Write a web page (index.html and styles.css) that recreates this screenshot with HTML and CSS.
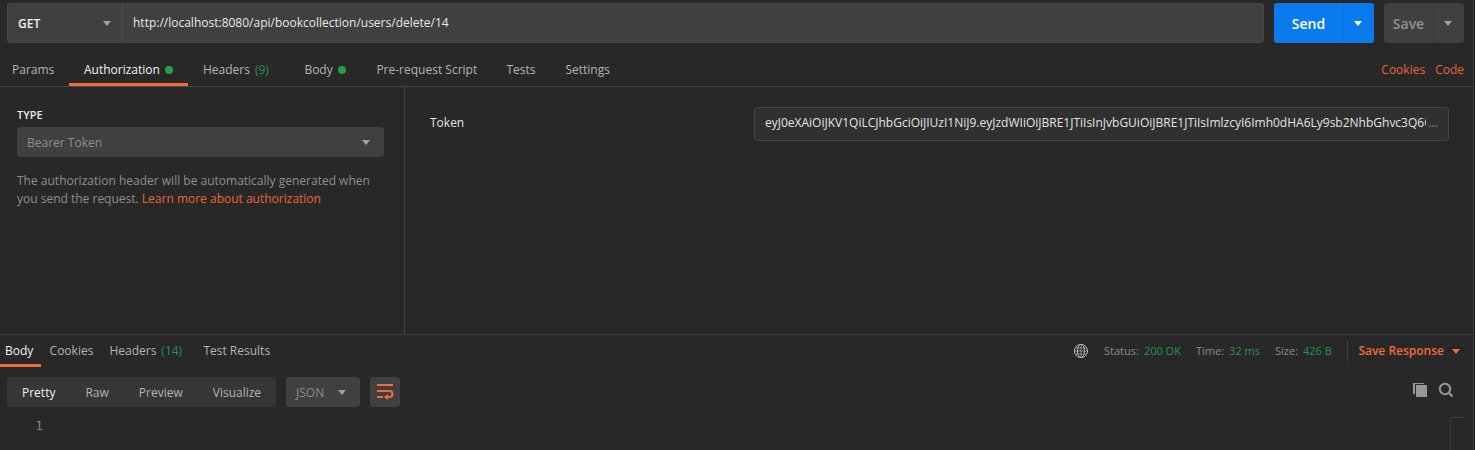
FILE: index.html
```html
<!DOCTYPE html>
<html lang="en">
<head>
<meta charset="utf-8">
<title>API request</title>
<link rel="stylesheet" href="styles.css">
</head>
<body>
<div class="app">
  <header class="request-bar">
    <div class="url-group">
      <div class="method"><span>GET</span><i class="caret"></i></div>
      <div class="url">http://localhost:8080/api/bookcollection/users/delete/14</div>
    </div>
    <div class="button send"><span class="label">Send</span><span class="drop"><i class="caret"></i></span></div>
    <div class="button save"><span class="label">Save</span><span class="drop"><i class="caret"></i></span></div>
  </header>
  <nav class="tabs">
    <span class="tab tab-params">Params</span>
    <span class="tab tab-auth active">Authorization<i class="dot"></i></span>
    <span class="tab tab-headers">Headers<span class="count">(9)</span></span>
    <span class="tab tab-body">Body<i class="dot"></i></span>
    <span class="tab tab-pre">Pre-request Script</span>
    <span class="tab tab-tests">Tests</span>
    <span class="tab">Settings</span>
    <span class="links"><a>Cookies</a><a>Code</a></span>
  </nav>
  <main class="auth">
    <section class="auth-type">
      <h2>TYPE</h2>
      <div class="select"><span>Bearer Token</span><i class="caret"></i></div>
      <p>The authorization header will be automatically generated when<br>you send the request. <a>Learn more about authorization</a></p>
    </section>
    <section class="auth-fields">
      <label>Token</label>
      <div class="token"><span class="value">eyJ0eXAiOiJKV1QiLCJhbGciOiJIUzI1NiJ9.eyJzdWIiOiJBRE1JTiIsInJvbGUiOiJBRE1JTiIsImlzcyI6Imh0dHA6Ly9sb2NhbGhvc3Q6O</span><span class="more">...</span></div>
    </section>
  </main>
  <section class="response">
    <div class="response-head">
      <span class="rtab rtab-body active">Body</span>
      <span class="rtab rtab-cookies">Cookies</span>
      <span class="rtab rtab-headers">Headers<span class="count">(14)</span></span>
      <span class="rtab">Test Results</span>
      <div class="meta">
        <svg class="globe" width="16" height="16" viewBox="0 0 16 16" fill="none" stroke="#b4b4b4" stroke-width="1"><circle cx="8" cy="8" r="6.6"/><ellipse cx="8" cy="8" rx="3.5" ry="6.6"/><path d="M2.6 5h10.8M1.4 8h13.2M2.6 11h10.8M8 1.4v13.2" stroke-opacity=".7"/></svg>
        <span class="stat stat-status">Status:<b>200 OK</b></span>
        <span class="stat stat-time">Time:<b>32 ms</b></span>
        <span class="stat stat-size">Size:<b>426 B</b></span>
        <span class="save-response">Save Response<i class="caret"></i></span>
      </div>
    </div>
    <div class="toolbar">
      <div class="views"><span class="on">Pretty</span><span>Raw</span><span>Preview</span><span>Visualize</span></div>
      <div class="format"><span>JSON</span><i class="caret"></i></div>
      <div class="wrap"><svg width="30" height="30" viewBox="0 0 30 30" fill="none" stroke="#f26b3a" stroke-width="2"><path d="M7 8h16M7 14h12.5a3 3 0 0 1 0 6H16M7 20h6"/><path d="M18 17l-4 3 4 3z" fill="#f26b3a" stroke="none"/></svg></div>
      <div class="tools">
        <svg width="16" height="16" viewBox="0 0 16 16"><path d="M1 1h11v1H3v10H1z" fill="#979797"/><path d="M4 3h11v12H4z" fill="#979797"/></svg>
        <svg width="16" height="16" viewBox="0 0 16 16" fill="none" stroke="#979797" stroke-width="2"><circle cx="7" cy="7" r="5.2"/><path d="M10.8 10.8l3.7 3.7" stroke-width="2.2"/></svg>
      </div>
    </div>
    <div class="editor"><span class="line-number">1</span><div class="minimap"></div></div>
  </section>
</div>
</body>
</html>
```

FILE: styles.css
```css
* { box-sizing: border-box; }
body { margin: 0; background: #161616; font: 12px/18px "Open Sans", "Noto Sans", sans-serif; color: #b4b4b4; }
.app { width: 1474px; height: 450px; background: #282828; border-right: 1px solid #3c3c3c; overflow: hidden; display: flex; flex-direction: column; white-space: nowrap; }
a { color: #e8653a; }
.caret { display: block; flex: none; width: 0; height: 0; border: 4px solid transparent; border-top: 5px solid #a0a0a0; border-bottom: 0; }
.request-bar { display: flex; height: 53px; padding: 3px 9px 0 7px; }
.url-group { display: flex; width: 1257px; height: 40px; margin-right: 10px; background: #404040; border: 1px solid #484848; border-radius: 3px; }
.method { display: flex; align-items: center; justify-content: space-between; width: 115px; padding: 2px 11px 0 10px; border-right: 1px solid #4b4b4b; color: #f0f0f0; font-weight: 600; }
.method .caret { margin-top: -2px; }
.url { padding: 10px; color: #e8e8e8; }
.button { display: flex; height: 40px; border-radius: 3px; font-size: 14px; font-weight: 600; overflow: hidden; }
.button .label { display: flex; align-items: center; justify-content: center; padding-top: 2px; }
.drop { flex: 1; display: flex; align-items: center; padding-left: 10px; }
.send { width: 100px; margin-right: 10px; background: #097bed; color: #fff; }
.send .label { width: 69px; }
.send .drop { border-left: 1px solid #0872dc; }
.send .caret { border-top-color: #fff; }
.save { width: 80px; background: #404040; color: #919191; }
.save .label { width: 49px; }
.save .drop { border-left: 1px solid #383838; }
.tabs { display: flex; height: 34px; border-bottom: 1px solid #464646; padding-right: 9px; }
.tab { display: flex; padding: 8px 15px 0; height: 33px; }
.tab-params { width: 69px; padding-left: 12px; }
.tab-auth { width: 119px; }
.tab-headers { width: 101.4px; }
.tab-body { width: 72px; }
.tab-pre { width: 130px; }
.tab-tests { width: 59px; }
.active { color: #f2f2f2; border-bottom: 3px solid #f26b3a; }
.dot { width: 8px; height: 8px; margin: 5px 0 0 5px; border-radius: 50%; background: #2a9d4d; flex: none; }
.count { color: #26934a; margin-left: 5px; }
.links { margin-left: auto; padding-top: 8px; display: flex; gap: 10px; }
.auth { display: flex; height: 248px; border-bottom: 1px solid #3f3f3f; }
.auth-type { width: 405px; padding: 19px 20px 0 17px; border-right: 1px solid #464646; color: #8e8e8e; }
h2 { margin: 0 0 3px; font-size: 11px; line-height: 18px; font-weight: 600; color: #e8e8e8; }
.select { display: flex; align-items: center; justify-content: space-between; height: 30px; padding: 0 14px 0 10px; background: #404040; border-radius: 3px; }
.select span, .format span { padding-top: 2px; }
p { margin: 15px 0 0; }
.auth-fields { flex: 1; display: flex; padding: 20px 24px 0 25px; color: #e4e4e4; }
label { width: 324px; padding-top: 7px; }
.token { display: flex; width: 695px; height: 34px; padding: 6px 10px; background: #303030; border: 1px solid #444; border-radius: 3px; }
.value { width: 661px; overflow: hidden; }
.more { color: #8c8c8c; margin-left: 3px; }
.response-head { display: flex; height: 32px; }
.rtab { display: flex; padding-top: 7px; }
.rtab-body { width: 41px; padding-left: 5px; margin-right: 8.6px; }
.rtab-cookies { width: 59.8px; }
.rtab-headers { width: 94px; }
.meta { display: flex; margin-left: auto; padding-top: 7px; }
.globe { margin: 1px 15px 0 0; }
.stat { display: flex; font-size: 11px; color: #8b8b8b; }
.stat b { font-weight: 400; color: #26934a; margin-left: 5px; }
.stat-status { width: 92px; }
.stat-time { width: 79px; }
.stat-size { width: 72px; }
.save-response { display: flex; width: 126px; height: 20px; margin-top: -1px; padding: 1px 0 0 10.4px; border-left: 1px solid #464646; color: #f26b3a; font-weight: 600; }
.save-response .caret { margin: 7px 0 0 8px; border-top-color: #f26b3a; }
.toolbar { display: flex; height: 40px; margin-top: 10px; padding: 0 19px 0 7px; }
.views { display: flex; width: 269px; height: 30px; padding: 7px 0 0 15px; gap: 30px; background: #363636; border-radius: 3px; }
.on { color: #f2f2f2; }
.format { display: flex; align-items: center; justify-content: space-between; width: 74px; height: 30px; padding: 0 14px 0 10px; margin: 0 10px; background: #404040; border-radius: 3px; color: #8b8b8b; }
.wrap { width: 30px; height: 30px; background: #404040; border-radius: 3px; }
.tools { display: flex; gap: 10px; margin: 5px 0 0 auto; }
.editor { display: flex; justify-content: space-between; height: 33px; padding-right: 9px; }
.line-number { padding-left: 35.5px; font-family: "DejaVu Sans Mono", monospace; color: #858580; }
.minimap { width: 14px; border: solid #3b3b3b; border-width: 1px 0 0 1px; }
```
